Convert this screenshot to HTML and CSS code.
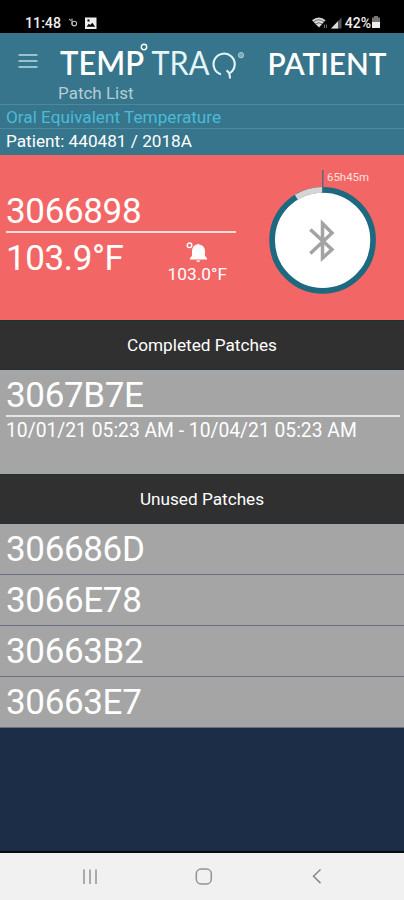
FILE: index.html
```html
<!DOCTYPE html>
<html lang="en">
<head>
<meta charset="utf-8">
<title>Patch List</title>
<link rel="stylesheet" href="styles.css">
</head>
<body>
<div class="status">
  <span class="time">11:48</span>
  <svg class="status-left" width="30" height="14" viewBox="0 0 30 14">
    <g fill="none" stroke="#bbb" stroke-width="1.1"><path d="M1 3.2l2 1.3M4 2.5v6.3"/><circle cx="6.3" cy="7.600" r="2.300"/></g>
    <path fill="#eee" fill-rule="evenodd" d="M17 1.500h11.500v11.500h-11.500zM18.500 10.800h8.700l-2.900-4-2 2.200-1.400-1.300zM19.500 3.500v2h2v-2z"/>
  </svg>
  <svg class="status-right" width="32" height="14" viewBox="0 0 32 14">
    <path fill="#ddd" d="M0 4.200Q7-1.300 13.500 4.200L7 11.500z"/>
    <path d="M1.600 5.900Q7 1.700 12 5.900M3.500 8Q7 5.400 10.300 8" fill="none" stroke="#444" stroke-width=".8"/>
    <path d="M12.400 8.500v3.500M14.400 8.500v3.500" stroke="#777"/>
    <path fill="#555" d="M19 12.500L29.500 1.500v11z"/><path fill="#ddd" d="M19 12.500l7-7.300v7.300z"/>
  </svg>
  <span class="percent">42%</span>
  <svg class="battery" width="10" height="13" viewBox="0 0 10 13">
    <path fill="#777" d="M3 0h4v1.500h2v5H1v-5h2z"/><path fill="#eee" d="M1 6h8v6H1z"/>
  </svg>
</div>
<header class="header">
  <svg class="menu" width="20" height="16" viewBox="0 0 20 16"><path d="M.5 2h19M.5 8h19M.5 14h19" stroke="#b9dce6" stroke-width="1.700"/></svg>
  <div class="brand">
    <svg class="wordmark" width="346" height="42" viewBox="0 0 346 42">
      <text class="temp" x="2" y="33" textLength="84" lengthAdjust="spacingAndGlyphs">TEMP</text>
      <circle cx="86" cy="5" r="2.700" fill="none" stroke="#fff" stroke-width="1.400"/>
      <text class="traq" x="93.500" y="33" textLength="58" lengthAdjust="spacingAndGlyphs">TRA</text>
      <path d="M163 32.300A10.600 10.600 0 1 1 172 31M168.500 28.500Q172 30 172 36.500" fill="none" stroke="#e3f4fa" stroke-width="2.100"/>
      <circle cx="183" cy="13.200" r="2.700" fill="#77a9b9" stroke="#a4cad5"/>
      <text class="patient-word" x="209.500" y="33" textLength="119" lengthAdjust="spacingAndGlyphs">PATIENT</text>
    </svg>
    <div class="page-title">Patch List</div>
  </div>
</header>
<div class="info mode">Oral Equivalent Temperature</div>
<div class="info patient">Patient: 440481 / 2018A</div>
<section class="active">
  <div class="reading">
    <div class="patch-id">3066898</div>
    <div class="values">
      <div class="temperature">103.9°F</div>
      <div class="alarm">
        <svg width="22" height="21" viewBox="0 0 22 21">
          <circle cx="3.500" cy="3.300" r="2.300" fill="none" stroke="#fff" stroke-width="1.400"/>
          <path fill="#fff" d="M11 2.500q1-1.500 2.200 0Q19 3.500 19 9.500v4.200l2 2.500v1.300H4v-1.300l2-2.500V9.500Q6 3.500 11 2.500zM10 18.500h4.500q-2.200 3-4.500 0z"/>
        </svg>
        <span>103.0°F</span>
      </div>
    </div>
  </div>
  <svg class="dial" width="110" height="130" viewBox="0 0 110 130">
    <circle cx="54.600" cy="74.300" r="50.500" fill="#fff" stroke="#1c6980" stroke-width="5.700"/>
    <path d="M28.300 31.200A50.500 50.500 0 0 1 54.600 23.800" fill="none" stroke="#d5d5d3" stroke-width="5.700"/>
    <path d="M54.800 4v23" stroke="#426b7e" stroke-width="1.300"/>
    <text class="remaining" x="59" y="15" textLength="42" lengthAdjust="spacingAndGlyphs">65h45m</text>
    <path d="M42.300 63.500L64 83.500 54.500 92V57.500L64 67 42.300 87.500" fill="none" stroke="#a3a3a3" stroke-width="3.500"/>
  </svg>
</section>
<h2 class="band">Completed Patches</h2>
<section class="completed">
  <div class="patch-id">3067B7E</div>
  <div class="dates">10/01/21 05:23 AM - 10/04/21 05:23 AM</div>
</section>
<h2 class="band">Unused Patches</h2>
<ul class="unused">
  <li>306686D</li>
  <li>3066E78</li>
  <li>30663B2</li>
  <li>30663E7</li>
</ul>
<nav class="nav">
  <svg width="20" height="20" viewBox="0 0 20 20"><path d="M4 2.500v14.500M10 2.500v14.500M16 2.500v14.500" stroke="#929292" stroke-width="1.500"/></svg>
  <svg width="20" height="20" viewBox="0 0 20 20"><rect x="2.300" y="2" width="15" height="15" rx="4.800" fill="none" stroke="#929292" stroke-width="1.500"/></svg>
  <svg width="20" height="20" viewBox="0 0 20 20"><path d="M13.500 2.500L6.500 9.300l7 6.800" fill="none" stroke="#888" stroke-width="1.500"/></svg>
</nav>
</body>
</html>
```
FILE: styles.css
```css
* { box-sizing: border-box; }
body {
  margin: 0;
  width: 404px;
  height: 900px;
  display: flex;
  flex-direction: column;
  overflow: hidden;
  background: #1b2d47;
  color: #fff;
  font-family: Roboto, "Liberation Sans", sans-serif;
}
svg { display: block; flex: none; }
.status {
  height: 33px;
  padding: 12px 23px 0 25px;
  display: flex;
  align-items: center;
  background: #000;
  color: #eee;
  font-size: 14.2px;
  font-weight: 500;
}
.time { width: 43px; }
.status-right { margin-left: auto; }
.percent { margin-left: 1px; font-size: 14px; }
.battery { margin-left: 0; }
.header {
  height: 72px;
  padding: 9px 0 0 18px;
  display: flex;
  background: #36758b;
  border-bottom: 1px solid #4d899d;
}
.menu { margin: 11px 20px 0 0; }
.wordmark text { font-family: Lato, sans-serif; font-size: 32px; fill: #fff; }
.wordmark .temp { font-weight: 600; }
.wordmark .traq { font-weight: 400; fill: #e3f4fa; }
.wordmark .patient-word { font-weight: 600; font-size: 31px; }
.page-title { font-size: 17px; line-height: 20px; margin: -1px 0 0; color: #b5ced6; }
.info { padding-left: 6px; background: #36758b; font-size: 17.2px; white-space: nowrap; }
.mode { height: 24px; line-height: 24px; color: #4abbd6; border-bottom: 1px solid #4d899d; }
.patient { height: 26px; line-height: 25px; }
.active {
  height: 165px;
  padding: 11px 26px 0 6px;
  display: flex;
  justify-content: space-between;
  background: #f26666;
}
.reading { width: 230px; padding-top: 20px; }
.patch-id { font-size: 35px; line-height: 51px; letter-spacing: -.35px; white-space: nowrap; }
.reading .patch-id { height: 47px; border-bottom: 2px solid #ffdcd7; }
.values { display: flex; justify-content: space-between; }
.temperature { font-size: 35px; line-height: 51px; letter-spacing: -.4px; }
.alarm {
  display: flex;
  flex-direction: column;
  align-items: center;
  margin: 9px 9px 0 0;
  font-size: 17.3px;
  line-height: 23px;
}
.remaining { font-size: 11px; fill: #ffe1dc; }
.band {
  height: 50px;
  margin: 0;
  border-top: 1px solid #1f3039;
  border-bottom: 1px solid #22303b;
  background: #303030;
  font-size: 17.2px;
  font-weight: 400;
  line-height: 49px;
  text-align: center;
}
.completed { height: 104px; padding: 0 4px 0 6px; background: #a5a5a5; }
.completed .patch-id { height: 47px; border-bottom: 2px solid #e4e4e4; }
.dates { font-size: 19.3px; line-height: 28px; white-space: nowrap; }
.unused { margin: 0; padding: 0; list-style: none; }
.unused li {
  height: 51px;
  padding-left: 6px;
  border-bottom: 1px solid #657080;
  background: #a5a5a5;
  font-size: 35px;
  line-height: 51px;
  letter-spacing: -.35px;
}
.nav {
  height: 49px;
  margin-top: auto;
  padding: 0 77px 0 80px;
  display: flex;
  justify-content: space-between;
  align-items: center;
  background: #f1f1f1;
  border-top: 2px solid #080b10;
}
```
